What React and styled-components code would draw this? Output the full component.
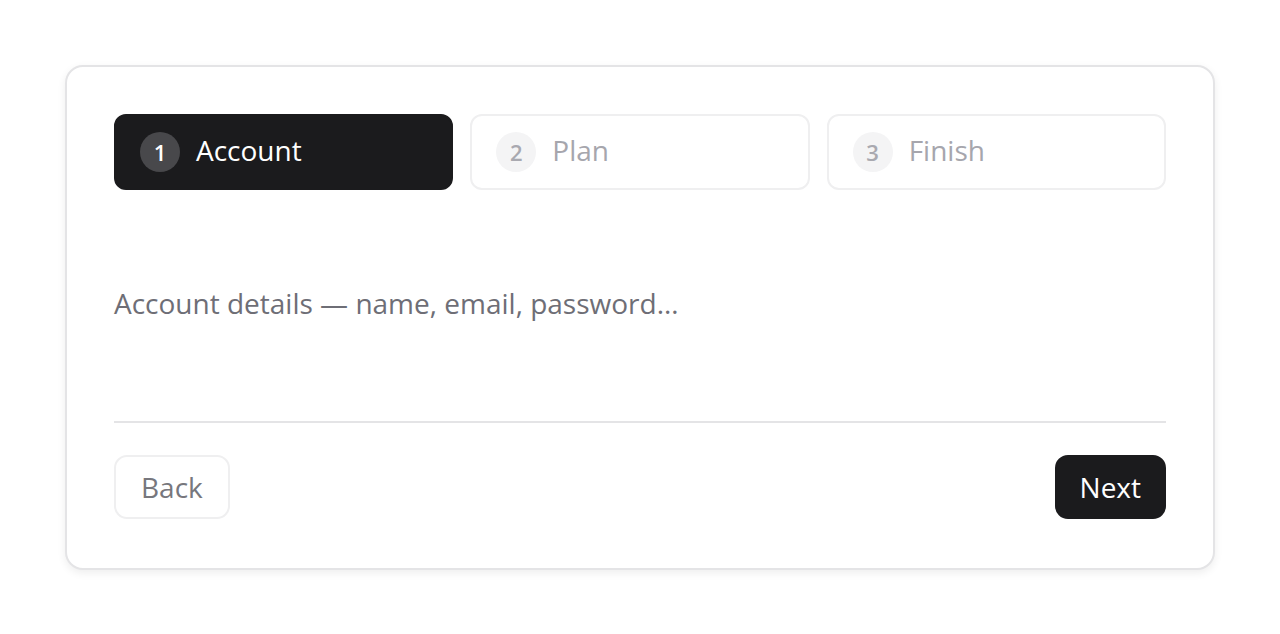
import React, { useState } from 'react'
import styled, { createGlobalStyle } from 'styled-components'

const GlobalStyle = createGlobalStyle`
    * { box-sizing: border-box; }
    body {
        margin: 0;
        background: #ffffff;
        font-family: "Open Sans", "Liberation Sans", sans-serif;
    }
`

const steps = [
    { label: 'Account', text: 'Account details — name, email, password…' },
    { label: 'Plan', text: 'Choose a plan that fits.' },
    { label: 'Finish', text: 'Review and confirm.' },
]

const App = () => {
    const [current, setCurrent] = useState(0)

    return (
        <Page>
            <GlobalStyle />
            <Card>
                <StepList>
                    {steps.map((s, i) => (
                        <Step key={s.label} $active={i === current} onClick={() => setCurrent(i)}>
                            <StepNumber $active={i === current}>{i + 1}</StepNumber>
                            <StepLabel>{s.label}</StepLabel>
                        </Step>
                    ))}
                </StepList>

                <Body>
                    <Description>{steps[current].text}</Description>
                </Body>

                <Footer>
                    <GhostButton onClick={() => setCurrent(Math.max(0, current - 1))}>Back</GhostButton>
                    <PrimaryButton onClick={() => setCurrent(Math.min(steps.length - 1, current + 1))}>Next</PrimaryButton>
                </Footer>
            </Card>
        </Page>
    )
}

export default App

const Page = styled.div`
    padding: 65px 65px;
`

const Card = styled.div`
    background: #fff;
    border: 2px solid #e4e4e6;
    border-radius: 18px;
    box-shadow: 0 3px 8px rgba(0, 0, 0, 0.07);
    padding: 47px 47px 47px;
    height: 505px;
    display: flex;
    flex-direction: column;
`

const StepList = styled.div`
    display: grid;
    grid-template-columns: repeat(3, 1fr);
    gap: 17px;
`

const Step = styled.div`
    display: flex;
    align-items: center;
    gap: 16px;
    height: 76px;
    padding: 0 24px;
    border-radius: 12px;
    cursor: pointer;
    background: ${p => p.$active ? '#1b1b1d' : '#fff'};
    border: 2px solid ${p => p.$active ? '#1b1b1d' : '#efeff0'};
    color: ${p => p.$active ? '#fff' : '#a6a6ad'};
`

const StepNumber = styled.span`
    width: 40px;
    height: 40px;
    flex-shrink: 0;
    border-radius: 50%;
    display: flex;
    align-items: center;
    justify-content: center;
    font-size: 22px;
    font-weight: 600;
    background: ${p => p.$active ? '#48484b' : '#f4f4f5'};
    color: ${p => p.$active ? '#fff' : '#a9a9b0'};
`

const StepLabel = styled.span`
    font-size: 28px;
    font-weight: 500;
    line-height: 1;
    padding-bottom: 4px;
`

const Body = styled.div`
    height: 233px;
    padding-bottom: 4px;
    display: flex;
    align-items: center;
    border-bottom: 2px solid #e4e4e6;
`

const Description = styled.p`
    margin: 0;
    font-size: 28px;
    line-height: 1.4;
    color: #6e6e76;
`

const Footer = styled.div`
    display: flex;
    justify-content: space-between;
    align-items: center;
    padding-top: 32px;
`

const BaseButton = styled.button`
    font-family: inherit;
    font-size: 28px;
    font-weight: 500;
    height: 64px;
    border-radius: 13px;
    cursor: pointer;
`

const GhostButton = styled(BaseButton)`
    padding: 0 25px;
    background: #fff;
    color: #77777d;
    border: 2px solid #efeff0;
`

const PrimaryButton = styled(BaseButton)`
    padding: 0 23px;
    background: #1b1b1d;
    color: #fff;
    border: 2px solid #1b1b1d;
`
